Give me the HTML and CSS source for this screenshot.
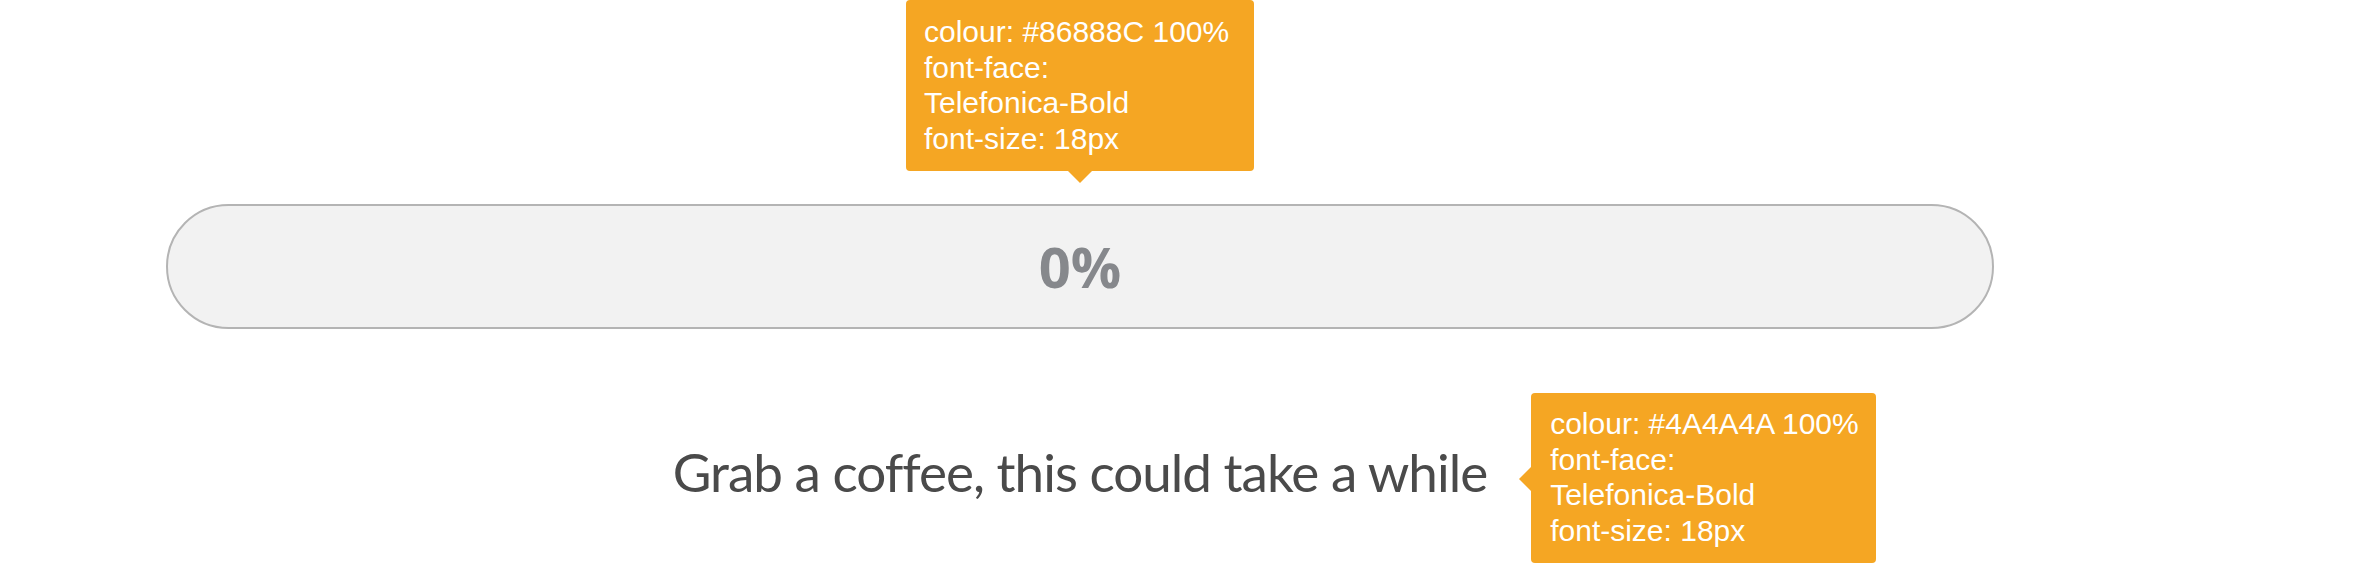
FILE: index.html
```html
<!DOCTYPE html>
<html lang="en">
<head>
<meta charset="utf-8">
<title>Progress</title>
<link rel="stylesheet" href="styles.css">
</head>
<body>
<main class="stage">
  <div class="note note--top">
    <span class="note__line">colour: #86888C 100%</span>
    <span class="note__line">font-face:</span>
    <span class="note__line">Telefonica-Bold</span>
    <span class="note__line">font-size: 18px</span>
  </div>
  <div class="progress">
    <span class="progress__value">0%</span>
  </div>
  <div class="caption-row">
    <span class="caption">Grab a coffee, this could take a while<span class="note note--side">
        <span class="note__line">colour: #4A4A4A 100%</span>
        <span class="note__line">font-face:</span>
        <span class="note__line">Telefonica-Bold</span>
        <span class="note__line">font-size: 18px</span>
      </span></span>
  </div>
</main>
</body>
</html>
```
FILE: styles.css
```css
html, body {
  margin: 0;
  padding: 0;
  background: #ffffff;
}

body {
  min-height: 564px;
}

.stage {
  width: 1828px;
  min-height: 564px;
  margin-left: 166px;
  display: flex;
  flex-direction: column;
  align-items: center;
}

.note {
  display: block;
  box-sizing: border-box;
  background: #F5A623;
  color: #ffffff;
  font-family: "Liberation Sans", Arial, sans-serif;
  font-size: 30px;
  line-height: 35.5px;
  letter-spacing: 0;
  border-radius: 4px;
  white-space: nowrap;
}

.note__line {
  display: block;
}

.note--top {
  position: relative;
  width: 348px;
  height: 171px;
  padding: 14px 0 0 18px;
}

.note--top::after {
  content: "";
  position: absolute;
  left: 50%;
  top: 100%;
  margin-left: -12px;
  border-left: 12px solid transparent;
  border-right: 12px solid transparent;
  border-top: 12px solid #F5A623;
}

.progress {
  margin-top: 33px;
  width: 100%;
  height: 125px;
  box-sizing: border-box;
  border: 2px solid #B4B4B4;
  border-radius: 63px;
  background: #F2F2F2;
  display: flex;
  justify-content: center;
}

.progress__value {
  font-family: "Open Sans", sans-serif;
  font-weight: 700;
  font-size: 56px;
  line-height: 121px;
  color: #86888C;
}

.caption-row {
  margin-top: 111px;
  display: flex;
  justify-content: center;
  width: 100%;
}

.caption {
  position: relative;
  font-family: Lato, "Open Sans", sans-serif;
  font-weight: 400;
  font-size: 53px;
  line-height: 63.6px;
  letter-spacing: -1px;
  color: #4A4A4A;
}

.note--side {
  position: absolute;
  left: calc(100% + 44px);
  top: -47px;
  width: 345px;
  height: 170px;
  padding: 13px 0 0 19px;
}

.note--side::before {
  content: "";
  position: absolute;
  right: 100%;
  top: 74px;
  border-top: 12px solid transparent;
  border-bottom: 12px solid transparent;
  border-right: 12px solid #F5A623;
}
```
